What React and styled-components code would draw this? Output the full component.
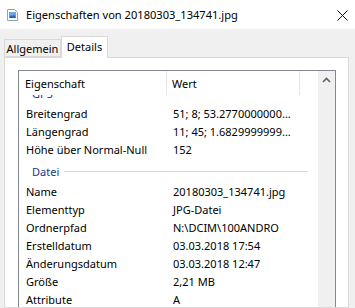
import styled, { createGlobalStyle } from "styled-components";

const GlobalStyle = createGlobalStyle`
  html, body {
    margin: 0;
    padding: 0;
    background: #f0f0f0;
    overflow: hidden;
  }
  body {
    font-family: "Noto Sans", "DejaVu Sans", sans-serif;
    font-size: 11px;
    color: #000;
  }
`;

const Window = styled.div`
  width: 355px;
  height: 308px;
  overflow: hidden;
  display: flex;
  flex-direction: column;
  background: #f0f0f0;
`;

const TitleBar = styled.div`
  height: 29px;
  flex-shrink: 0;
  background: #fff;
  display: flex;
  align-items: center;
  padding: 0 7px 0 7px;
`;

const TitleText = styled.div`
  flex: 1;
  margin-left: 8px;
  font-size: 11.1px;
  white-space: nowrap;
`;

const CloseButton = styled.div`
  width: 11px;
  height: 11px;
  display: flex;
  margin-top: 1px;
`;

const TabStrip = styled.div`
  height: 29px;
  flex-shrink: 0;
  display: flex;
  align-items: flex-end;
  padding-left: 4px;
  position: relative;
  z-index: 1;
`;

const Tab = styled.div`
  box-sizing: border-box;
  display: flex;
  align-items: center;
  justify-content: center;
  border: 1px solid #d9d9d9;
  width: ${(p) => p.$width}px;
  height: ${(p) => (p.$active ? 22 : 18)}px;
  margin-bottom: ${(p) => (p.$active ? 0 : 1)}px;
  background: ${(p) => (p.$active ? "#fff" : "#f0f0f0")};
  border-bottom: ${(p) => (p.$active ? "none" : "1px solid #d9d9d9")};
  padding-bottom: ${(p) => (p.$active ? 3 : 0)}px;
`;

const Panel = styled.div`
  flex: 1;
  min-height: 0;
  margin: -1px 6px 0 4px;
  border: 1px solid #d9d9d9;
  background: #fff;
  padding: 12px 12px 0 13px;
  overflow: hidden;
`;

const ListView = styled.div`
  width: 318px;
  height: 260px;
  box-sizing: border-box;
  border: 1px solid #828790;
  display: flex;
  overflow: hidden;
`;

const ListContent = styled.div`
  flex: 1;
  display: flex;
  flex-direction: column;
  min-width: 0;
`;

const Header = styled.div`
  height: 24px;
  flex-shrink: 0;
  display: grid;
  grid-template-columns: 148px 133px 1fr;
  position: relative;
  z-index: 1;
  background: #fff;
`;

const HeaderCell = styled.div`
  display: flex;
  align-items: center;
  padding-left: ${(p) => p.$pad}px;
  border-right: ${(p) => (p.$last ? "none" : "1px solid #e5e5e5")};
`;

const Body = styled.div`
  flex: 1;
  overflow: hidden;
`;

const Rows = styled.div`
  margin-top: -15px;
`;

const Group = styled.div`
  height: 24px;
  display: flex;
  align-items: center;
  padding: 2px 10px 0 13px;
  box-sizing: border-box;
  color: #1e3287;
`;

const GroupLine = styled.div`
  flex: 1;
  height: 1px;
  margin-left: 5px;
  background: #d2d9e4;
`;

const Row = styled.div`
  height: 18px;
  display: grid;
  grid-template-columns: 148px 1fr;
  align-items: center;
  white-space: nowrap;
`;

const Cell = styled.div`
  padding-left: ${(p) => p.$pad}px;
  overflow: hidden;
`;

const ScrollBar = styled.div`
  width: 17px;
  flex-shrink: 0;
  background: #f0f0f0;
`;

const ScrollButton = styled.div`
  height: 17px;
  display: flex;
  align-items: center;
  justify-content: center;
`;

const FileIcon = () => (
  <svg width="11" height="12" viewBox="0 0 11 12">
    <path d="M0.5 0.5 H7.5 L10.5 3.5 V11.5 H0.5 Z" fill="#fff" stroke="#8fa3bf" />
    <rect x="2" y="3" width="7" height="6" fill="#6fa8e6" />
    <path d="M2 9 L4 6 L5.5 7.5 L7 5.5 L9 9 Z" fill="#1f5fb4" />
  </svg>
);

const CloseIcon = () => (
  <svg width="11" height="11" viewBox="0 0 11 11">
    <path d="M0.5 0.5 L10.5 10.5 M10.5 0.5 L0.5 10.5" stroke="#111" strokeWidth="1" />
  </svg>
);

const UpArrow = () => (
  <svg width="9" height="6" viewBox="0 0 9 6">
    <path d="M1 5 L4.5 1.5 L8 5" fill="none" stroke="#606060" strokeWidth="1.6" />
  </svg>
);

// GPS-Gruppe ist nach oben gescrollt, nur der untere Rand ist sichtbar
const items = [
  { group: "GPS" },
  { name: "Breitengrad", value: "51; 8; 53.2770000000..." },
  { name: "Längengrad", value: "11; 45; 1.6829999999..." },
  { name: "Höhe über Normal-Null", value: "152" },
  { group: "Datei" },
  { name: "Name", value: "20180303_134741.jpg" },
  { name: "Elementtyp", value: "JPG-Datei" },
  { name: "Ordnerpfad", value: "N:\\DCIM\\100ANDRO" },
  { name: "Erstelldatum", value: "03.03.2018 17:54" },
  { name: "Änderungsdatum", value: "03.03.2018 12:47" },
  { name: "Größe", value: "2,21 MB" },
  { name: "Attribute", value: "A" }
];

export default function App() {
  return (
    <>
      <GlobalStyle />
      <Window>
        <TitleBar>
          <FileIcon />
          <TitleText>Eigenschaften von 20180303_134741.jpg</TitleText>
          <CloseButton>
            <CloseIcon />
          </CloseButton>
        </TitleBar>
        <TabStrip>
          <Tab $width={57}>Allgemein</Tab>
          <Tab $width={47} $active>
            Details
          </Tab>
        </TabStrip>
        <Panel>
          <ListView>
            <ListContent>
              <Header>
                <HeaderCell $pad={6}>Eigenschaft</HeaderCell>
                <HeaderCell $pad={5}>Wert</HeaderCell>
                <HeaderCell $last />
              </Header>
              <Body>
                <Rows>
                  {items.map((item, i) =>
                    item.group ? (
                      <Group key={i}>
                        {item.group}
                        <GroupLine />
                      </Group>
                    ) : (
                      <Row key={i}>
                        <Cell $pad={7}>{item.name}</Cell>
                        <Cell $pad={6}>{item.value}</Cell>
                      </Row>
                    )
                  )}
                </Rows>
              </Body>
            </ListContent>
            <ScrollBar>
              <ScrollButton>
                <UpArrow />
              </ScrollButton>
            </ScrollBar>
          </ListView>
        </Panel>
      </Window>
    </>
  );
}
